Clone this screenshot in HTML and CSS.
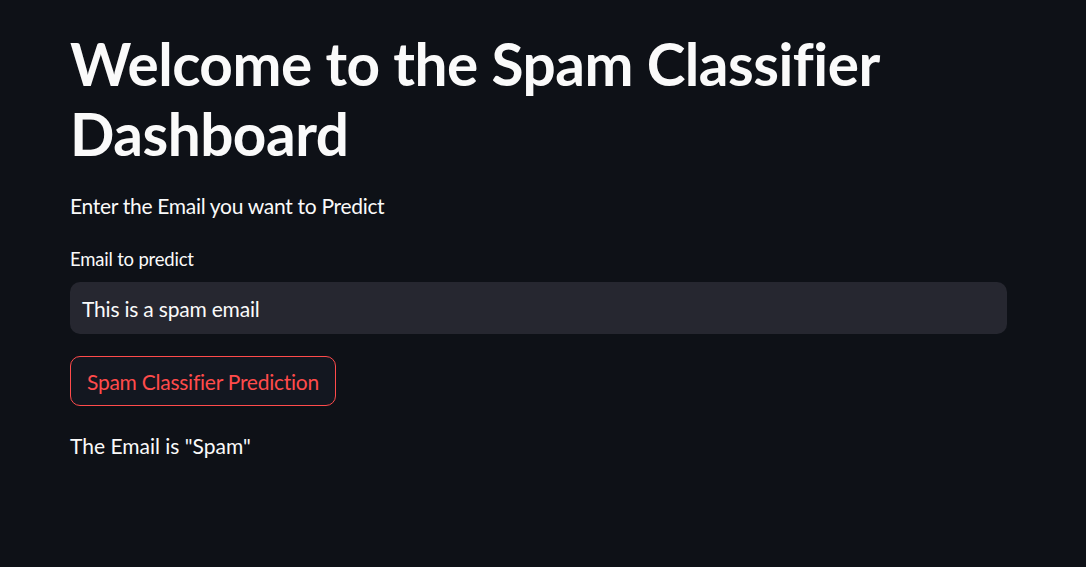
FILE: index.html
```html
<!DOCTYPE html>
<html>
<head>
<meta charset="utf-8">
<link rel="stylesheet" href="styles.css">
</head>
<body>
<main class="main">
  <h1 class="title">Welcome to the Spam Classifier Dashboard</h1>
  <p class="intro">Enter the Email you want to Predict</p>
  <div class="field">
    <label class="label">Email to predict</label>
    <div class="input">This is a spam email</div>
  </div>
  <button class="btn">Spam Classifier Prediction</button>
  <p class="result">The Email is "Spam"</p>
</main>
</body>
</html>
```

FILE: styles.css
```css
html, body {
  margin: 0;
  padding: 0;
  background: #0e1117;
  color: #fafafa;
  font-family: "Lato", "Liberation Sans", sans-serif;
}
.main {
  width: 937px;
  padding: 28px 0 0 70px;
  display: flex;
  flex-direction: column;
  align-items: flex-start;
}
.title {
  margin: 0;
  font-size: 58.5px;
  line-height: 70px;
  font-weight: 700;
  letter-spacing: -0.5px;
  width: 860px;
}
.intro {
  margin: 23px 0 0;
  font-size: 21px;
  line-height: 30px;
  letter-spacing: -0.3px;
}
.field {
  margin-top: 25px;
  width: 937px;
  display: flex;
  flex-direction: column;
}
.label {
  font-size: 18.5px;
  line-height: 26px;
  letter-spacing: -0.2px;
  margin-bottom: 10px;
}
.input {
  height: 52px;
  box-sizing: border-box;
  background: #262730;
  border-radius: 10px;
  padding: 0 12px;
  display: flex;
  align-items: center;
  font-size: 21px;
  letter-spacing: -0.2px;
}
.btn {
  margin-top: 22px;
  height: 50px;
  box-sizing: border-box;
  padding: 0 16px;
  background: #131720;
  border: 1px solid #ff4b4b;
  border-radius: 10px;
  color: #ff4b4b;
  font-family: inherit;
  font-size: 21px;
  letter-spacing: -0.25px;
}
.result {
  margin: 25px 0 0;
  font-size: 21px;
  line-height: 30px;
}
```
